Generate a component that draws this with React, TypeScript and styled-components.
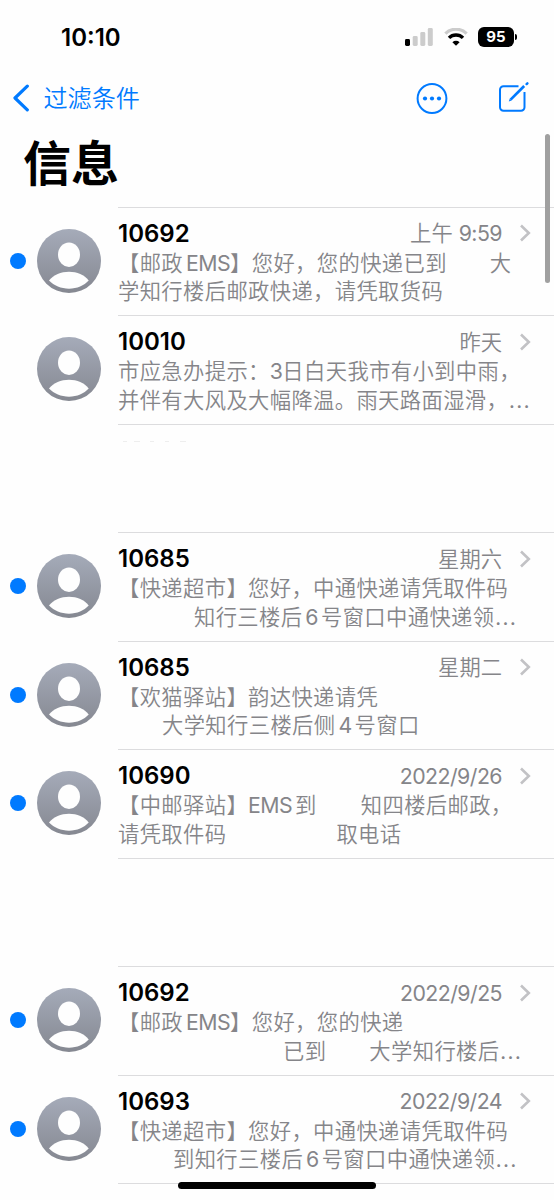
import React from "react";
import styled, { createGlobalStyle } from "styled-components";

const Global = createGlobalStyle`
  * { box-sizing: border-box; }
  html, body { margin: 0; padding: 0; background: #fefefe; }
  body { font-family: Inter, "Noto Sans CJK SC", sans-serif; overflow: hidden; }
`;

const Screen = styled.main`
  position: relative;
  display: flex;
  flex-direction: column;
  width: 554px;
  height: 1200px;
  overflow: hidden;
  background: #fefefe;
`;

const StatusBar = styled.header`
  display: flex;
  flex: none;
  align-items: center;
  justify-content: space-between;
  height: 74px;
  padding: 0 40px 0 61px;
`;

const Clock = styled.time`
  padding-top: 2px;
  font-size: 24px;
  font-weight: 600;
  line-height: 30px;
`;

const StatusIcons = styled.div`
  display: flex;
  align-items: center;
  gap: 10.5px;
`;

const Battery = styled.div`
  position: relative;
  width: 36px;
  height: 20px;
  border-radius: 6px;
  background: #000;
  color: #fff;
  font-size: 15px;
  font-weight: 700;
  line-height: 20px;
  text-align: center;
  &::after {
    content: "";
    position: absolute;
    left: 37px;
    top: 7px;
    width: 2px;
    height: 6px;
    border-radius: 0 2px 2px 0;
    background: #000;
  }
`;

const NavBar = styled.nav`
  display: flex;
  flex: none;
  align-items: center;
  justify-content: space-between;
  height: 48px;
  padding: 0 24px 0 12px;
  color: #007aff;
`;

const Back = styled.a`
  display: flex;
  align-items: center;
  gap: 13.5px;
  font-size: 24.1px;
  font-weight: 350;
  line-height: 30px;
`;

const BackLabel = styled.span`
  padding-top: 2px;
`;

const NavActions = styled.div`
  display: flex;
  align-items: center;
  gap: 50px;
`;

const Title = styled.h1`
  flex: none;
  margin: 0;
  height: 84.6px;
  padding: 10px 0 0 23px;
  font-size: 48px;
  font-weight: 700;
  line-height: 64px;
`;

const List = styled.ul`
  flex: none;
  margin: 0;
  padding: 0;
  list-style: none;
`;

const Row = styled.li`
  display: flex;
  height: 108.5px;
`;

const Lead = styled.div`
  display: flex;
  align-items: center;
  gap: 11px;
  width: 118px;
  padding-left: 10px;
`;

const Dot = styled.span<{ $on: boolean }>`
  width: 16px;
  height: 16px;
  border-radius: 50%;
  background: ${(p) => (p.$on ? "#007aff" : "transparent")};
`;

const Body = styled.div`
  flex: 1;
  border-top: 1px solid #dcdcde;
  padding: 10px 23px 0 0;
`;

const Head = styled.div`
  display: flex;
  align-items: center;
  height: 31px;
`;

const Name = styled.span`
  flex: 1;
  font-size: 24px;
  font-weight: 600;
  line-height: 31px;
`;

const When = styled.time`
  margin-right: 17px;
  padding-top: 1px;
  color: #858589;
  font-size: 21.3px;
  font-weight: 350;
  line-height: 31px;
`;

const Line = styled.p`
  margin: 0;
  height: 28.5px;
  line-height: 28.5px;
  font-size: 21.3px;
  font-weight: 350;
  letter-spacing: 0.38px;
  word-spacing: -3.4px;
  white-space: nowrap;
  color: #858589;
`;

const Segment = styled.span<{ $gap: number }>`
  margin-left: ${(p) => p.$gap}px;
`;

const Latin = styled.span`
  font-weight: 400;
  letter-spacing: -0.55px;
`;

const Ellipsis = styled.span`
  font-size: 26px;
  line-height: 0;
`;

const ResidueMark = styled.svg`
  display: block;
  margin-top: -4px;
`;

const ScrollThumb = styled.div`
  position: absolute;
  top: 134px;
  right: 4px;
  width: 5px;
  height: 149px;
  border-radius: 3px;
  background: #a0a0a0;
`;

const HomeIndicator = styled.div`
  position: absolute;
  left: 178px;
  bottom: 11px;
  width: 198px;
  height: 7px;
  border-radius: 4px;
  background: #000;
`;

const SignalIcon = () => (
  <svg width="28" height="18" viewBox="0 0 28 18">
    <rect x="0" y="11" width="5" height="7" rx="1.4" fill="#000" />
    <rect x="7.7" y="8" width="5" height="10" rx="1.4" fill="#ccc" />
    <rect x="15.3" y="4" width="5" height="14" rx="1.4" fill="#ccc" />
    <rect x="22.8" y="0" width="5" height="18" rx="1.4" fill="#ccc" />
  </svg>
);

const WifiIcon = () => (
  <svg width="24" height="18" viewBox="0 0 24 18" fill="none">
    <path d="M1.4 5.6a15 15 0 0 1 21.2 0" stroke="#ccc" strokeWidth="3.2" />
    <path d="M5 9.9a9.8 9.8 0 0 1 14 0" stroke="#000" strokeWidth="3.4" />
    <path d="M8.4 14.2a5.2 5.2 0 0 1 7.2 0L12 17.8z" fill="#000" />
  </svg>
);

const BackIcon = () => (
  <svg width="18" height="28" viewBox="0 0 18 28" fill="none">
    <path d="M15.3 2.2 3 14l12.3 11.8" stroke="#007aff" strokeWidth="3.2" strokeLinecap="round" strokeLinejoin="round" />
  </svg>
);

const MoreIcon = () => (
  <svg width="32" height="32" viewBox="0 0 32 32" fill="#007aff">
    <circle cx="16" cy="16.5" r="14.4" fill="none" stroke="#007aff" strokeWidth="2" />
    <circle cx="9" cy="16.5" r="2.1" />
    <circle cx="16" cy="16.5" r="2.1" />
    <circle cx="23" cy="16.5" r="2.1" />
  </svg>
);

const ComposeIcon = () => (
  <svg width="32" height="32" viewBox="0 0 32 32" fill="none" stroke="#007aff" strokeWidth="2">
    <path d="M20.5 4.300H5.500a3.500 3.500 0 0 0-3.500 3.500v17.400a3.500 3.500 0 0 0 3.500 3.500H23a3.500 3.500 0 0 0 3.500-3.500V10" />
    <path d="M12.600 17.600 26.200 4" strokeWidth="2.700" />
    <path d="m10.800 19.400.9-2.700 1.900 1.800z" fill="#007aff" stroke="none" />
    <path d="m28.600 2.100.8-.8" strokeWidth="2.400" strokeLinecap="round" />
  </svg>
);

const Avatar = () => (
  <svg width="64" height="64" viewBox="0 0 64 64">
    <defs>
      <linearGradient id="avatar" x1="0" y1="0" x2="0" y2="1">
        <stop offset="0" stopColor="#a5abb9" />
        <stop offset="1" stopColor="#858891" />
      </linearGradient>
    </defs>
    <circle cx="32" cy="32" r="32" fill="url(#avatar)" />
    <ellipse cx="32" cy="25.7" rx="11" ry="12.2" fill="#fefefe" />
    <path d="M12 51.5C16.5 46 24 42.7 32 42.7S47.5 46 51.7 51.5C47 56.5 40 59.7 32 59.7S17 56.5 12 51.5z" fill="#fefefe" />
  </svg>
);

const Chevron = () => (
  <svg width="12" height="20" viewBox="0 0 12 20" fill="none">
    <path d="m2 2.500 7.800 7.500L2 17.500" stroke="#c2c2c5" strokeWidth="2.600" />
  </svg>
);

const Residue = () => (
  <ResidueMark width="80" height="12" viewBox="0 0 80 12" fill="none">
    <path d="M5 10.500h4M16 10.500h6M32 10.500h4M47 10.500h4M62 10.500h6" stroke="#eee" />
  </ResidueMark>
);

type Seg = [gap: number, text: string];
interface Message {
  name: string;
  when: string;
  unread: boolean;
  lines: Seg[][];
}

const messages: (Message | "faded" | null)[] = [
  { name: "10692", when: "上午 9:59", unread: true, lines: [[[0, "【邮政 EMS】您好，您的快递已到"], [43, "大"]], [[0, "学知行楼后邮政快递，请凭取货码"]]] },
  { name: "10010", when: "昨天", unread: false, lines: [[[0, "市应急办提示：3日白天我市有小到中雨，"]], [[0, "并伴有大风及大幅降温。雨天路面湿滑，…"]]] },
  "faded",
  { name: "10685", when: "星期六", unread: true, lines: [[[0, "【快递超市】您好，中通快递请凭取件码"]], [[76, "知行三楼后 6 号窗口中通快递领…"]]] },
  { name: "10685", when: "星期二", unread: true, lines: [[[0, "【欢猫驿站】韵达快递请凭"]], [[44, "大学知行三楼后侧 4 号窗口"]]] },
  { name: "10690", when: "2022/9/26", unread: true, lines: [[[0, "【中邮驿站】EMS 到"], [44, "知四楼后邮政，"]], [[0, "请凭取件码"], [110, "取电话"]]] },
  null,
  { name: "10692", when: "2022/9/25", unread: true, lines: [[[0, "【邮政 EMS】您好，您的快递"]], [[165, "已到"], [43, "大学知行楼后…"]]] },
  { name: "10693", when: "2022/9/24", unread: true, lines: [[[0, "【快递超市】您好，中通快递请凭取件码"]], [[55, "到知行三楼后 6 号窗口中通快递领…"]]] },
  null,
];

const MixedText = ({ text }: { text: string }) => (
  <>
    {text.split(/([A-Z0-9:/]+|…)/).map((part, i) => {
      if (part === "…") return <Ellipsis key={i}>{part}</Ellipsis>;
      if (i % 2) return <Latin key={i}>{part}</Latin>;
      return part;
    })}
  </>
);

export default function App() {
  return (
    <Screen>
      <Global />
      <StatusBar>
        <Clock>10:10</Clock>
        <StatusIcons>
          <SignalIcon />
          <WifiIcon />
          <Battery>95</Battery>
        </StatusIcons>
      </StatusBar>
      <NavBar>
        <Back>
          <BackIcon />
          <BackLabel>过滤条件</BackLabel>
        </Back>
        <NavActions>
          <MoreIcon />
          <ComposeIcon />
        </NavActions>
      </NavBar>
      <Title>信息</Title>
      <List>
        {messages.map((m, i) => {
          if (m === null || m === "faded") {
            return (
              <Row key={i}>
                <Lead />
                <Body>{m && <Residue />}</Body>
              </Row>
            );
          }
          return (
            <Row key={i}>
              <Lead>
                <Dot $on={m.unread} />
                <Avatar />
              </Lead>
              <Body>
                <Head>
                  <Name>{m.name}</Name>
                  <When>
                    <MixedText text={m.when} />
                  </When>
                  <Chevron />
                </Head>
                {m.lines.map((line, j) => (
                  <Line key={j}>
                    {line.map(([gap, text], k) => (
                      <Segment key={k} $gap={gap}>
                        <MixedText text={text} />
                      </Segment>
                    ))}
                  </Line>
                ))}
              </Body>
            </Row>
          );
        })}
      </List>
      <ScrollThumb />
      <HomeIndicator />
    </Screen>
  );
}
